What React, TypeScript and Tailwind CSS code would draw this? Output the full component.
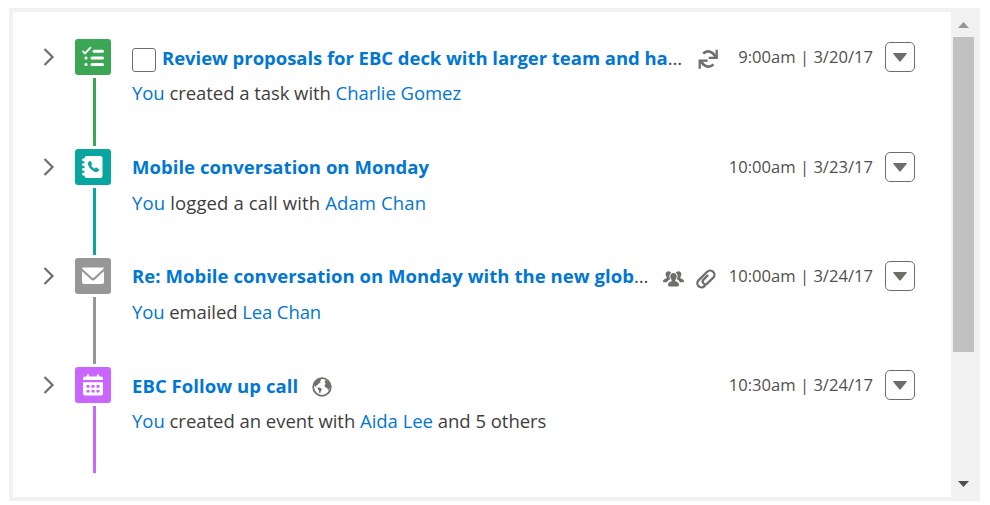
import type { ReactNode } from 'react';

interface Activity {
  id: string;
  title: string;
  action: string;
  who: string;
  rest?: string;
  time: string;
  color: string;
  height: string;
  titleClass: string;
  detailClass: string;
  trailingClass?: string;
  icon: ReactNode;
  hasCheckbox?: boolean;
  inline?: ReactNode;
  trailing?: ReactNode;
}

function TaskIcon() {
  return (
    <svg className="w-9 h-9" viewBox="0 0 36 36" fill="none" stroke="#fff">
      <path d="M7.5 11.8l2.5 2.6L16 8.2" strokeWidth="1.9" />
      <path d="M19 12.2h8.5M17 18.9h10.5M17 25.4h10.5" strokeWidth="3" strokeLinecap="round" />
      <path d="M10.9 18.9h.2M10.9 25.4h.2" strokeWidth="3" strokeLinecap="round" />
    </svg>
  );
}

function CallIcon() {
  return (
    <svg className="w-9 h-9" viewBox="0 0 36 36">
      <rect x="9.5" y="7" width="18" height="22" rx="2.2" fill="#fff" />
      <path d="M8.4 10.8h3M8.4 15.6h3M8.4 20.4h3M8.4 25.2h3" stroke="#fff" strokeWidth="2.8" strokeLinecap="round" />
      <path
        d="M13.4 13.2c.5-.9 1.4-1.5 2.1-.9l1.4 1.7c.4.6.2 1.2-.2 1.6-.6.6-.5 1 0 1.7.7 1 1.6 1.8 2.4 2.1.6.3.9 0 1.3-.5.4-.4.9-.4 1.4-.1l1.9 1.3c.7.6.4 1.2-.2 1.9-1.1 1.2-2.6 1.2-4.4.4-2.4-1.1-4.6-3.3-5.6-5.6-.6-1.4-.7-2.6-.1-3.6z"
        fill="#08a69e"
      />
    </svg>
  );
}

function EmailIcon() {
  return (
    <svg className="w-9 h-9" viewBox="0 0 36 36">
      <path d="M8 9.5h20c.7 0 1 .7.6 1.2L19 19.5c-.6.6-1.5.6-2.1 0L7.3 10.7C6.9 10.2 7.3 9.5 8 9.5z" fill="#fff" />
      <path d="M7 13.3l9.3 8.4c1 .9 2.5.9 3.4 0l9.3-8.4V24a2 2 0 0 1-2 2H9a2 2 0 0 1-2-2z" fill="#fff" />
    </svg>
  );
}

function EventIcon() {
  return (
    <svg className="w-9 h-9" viewBox="0 0 36 36">
      <path d="M13 8.3v3M23 8.3v3" stroke="#fff" strokeWidth="2.2" strokeLinecap="round" />
      <path d="M10 9.5h16a2 2 0 0 1 2 2V13H8v-1.5a2 2 0 0 1 2-2zM8 15.2h20v11.3a2 2 0 0 1-2 2H10a2 2 0 0 1-2-2z" fill="#fff" />
      <path d="M11.5 19.4h3M16.5 19.4h3M21.5 19.4h3M11.5 24.2h3M16.5 24.2h3M21.5 24.2h3" stroke="#c965ff" strokeWidth="2.6" />
    </svg>
  );
}

function RecurrenceIcon() {
  return (
    <svg className="w-5 h-5" viewBox="0 0 20 20" fill="none" stroke="#706e6b" strokeWidth="2.6">
      <path d="M5.2 4.7C8.8.8 14 2 17.500 7.600" />
      <path d="M18.700.8v8h-8" strokeWidth="2.3" />
      <path d="M15.400 15.300C11.800 19.200 6.500 18 3 12.500" />
      <path d="M1.700 19.700v-8h8" strokeWidth="2.3" />
    </svg>
  );
}

function GroupsIcon() {
  return (
    <svg className="w-[21px] h-4" viewBox="0 0 21 16" fill="#706e6b">
      <path d="M5.5.2c1.300 0 2.300.7 2.600 1.800C6.700 3 6.200 4.500 6.500 6.300c.1.8.3 1.300.7 1.900-1.600.7-2.600 1.600-3.100 3.100H1C.4 11.300 0 10.900 0 10.300 0 8.700 1.500 8.200 3 7.600c.8-.3.9-1.300.4-1.900C2.900 5.100 2.600 4.300 2.600 3.300 2.600 1.500 3.700.2 5.500.2z" />
      <path d="M15.500.2c-1.300 0-2.300.7-2.600 1.800 1.400 1 1.900 2.500 1.600 4.300-.1.800-.3 1.300-.7 1.900 1.600.7 2.600 1.600 3.100 3.100H20c.6 0 1-.4 1-1 0-1.600-1.500-2.100-3-2.700-.8-.3-.9-1.300-.4-1.900.5-.6.8-1.400.8-2.400 0-1.800-1.100-3.100-2.900-3.100z" />
      <path d="M10.500 2.100c2 0 3.200 1.400 3.200 3.400 0 1.200-.4 2.200-1.100 2.900-.6.7-.5 1.700.4 2.100 1.800.8 3 1.300 3 3.300 0 .9-.6 1.600-1.500 1.600h-8c-.9 0-1.500-.7-1.500-1.600 0-2 1.200-2.500 3-3.300.9-.4 1-1.400.4-2.100-.7-.7-1.100-1.700-1.100-2.900 0-2 1.200-3.400 3.200-3.400z" />
    </svg>
  );
}

function AttachIcon() {
  return (
    <svg className="w-5 h-5" viewBox="0 0 20 20" fill="none" stroke="#706e6b" strokeWidth="2.300" strokeLinecap="round">
      <path d="M9.300 16.200l-.9.900a4 4 0 0 1-5.900-5.700l8.700-8.600a4.200 4.200 0 0 1 6 5.900l-5.800 5.700a2.700 2.700 0 0 1-3.900-3.800l4-4" />
    </svg>
  );
}

function WorldIcon() {
  return (
    <svg className="w-5 h-5" viewBox="0 0 20 20">
      <circle cx="10" cy="10" r="8.8" fill="none" stroke="#706e6b" strokeWidth="1.8" />
      <path d="M2 6.500L5.500 3l2.800-1.300 1 1-1.500 1.600 1 1-2.300 1.500-.8 1.300-1.500.2.4 1.300-1.100.2-1.500-1.700z" fill="#706e6b" />
      <path d="M5.800 10.300l2.800.6 1.400 1.500-1.200 1.700-.5 2.400-1-.5-.6-2.900-1-1z" fill="#706e6b" />
      <path d="M12.600 4.800l1.100-1.800L16.500 5l1.800 3.800-.8 2.800-1.200 2.200-1.100-2.900-2.100-.6-.7-2 1.300-1.300z" fill="#706e6b" />
    </svg>
  );
}

const activities: Activity[] = [
  {
    id: 'task',
    title: 'Review proposals for EBC deck with larger team and have it ready',
    action: 'created a task with',
    who: 'Charlie Gomez',
    time: '9:00am | 3/20/17',
    color: 'bg-[#3ba755]',
    height: 'h-[110px]',
    titleClass: 'w-[524px] mt-[2px] tracking-[-0.04px]',
    detailClass: 'tracking-[-0.055px]',
    trailingClass: 'mr-5 mt-[3px]',
    icon: <TaskIcon />,
    hasCheckbox: true,
    trailing: <RecurrenceIcon />,
  },
  {
    id: 'call',
    title: 'Mobile conversation on Monday',
    action: 'logged a call with',
    who: 'Adam Chan',
    time: '10:00am | 3/23/17',
    color: 'bg-[#08a69e]',
    height: 'h-[109px]',
    titleClass: 'tracking-[0.04px]',
    detailClass: 'tracking-[0.13px]',
    icon: <CallIcon />,
  },
  {
    id: 'email',
    title: 'Re: Mobile conversation on Monday with the new global team',
    action: 'emailed',
    who: 'Lea Chan',
    time: '10:00am | 3/24/17',
    color: 'bg-[#979797]',
    height: 'h-[109px]',
    titleClass: 'w-[520px] tracking-[0.05px]',
    detailClass: 'tracking-[-0.1px]',
    trailingClass: 'mr-[13px] mt-[5px]',
    icon: <EmailIcon />,
    trailing: (
      <>
        <GroupsIcon />
        <AttachIcon />
      </>
    ),
  },
  {
    id: 'event',
    title: 'EBC Follow up call',
    action: 'created an event with',
    who: 'Aida Lee',
    rest: 'and 5 others',
    time: '10:30am | 3/24/17',
    color: 'bg-[#c965ff]',
    height: 'h-[109px]',
    titleClass: 'mt-[2px] tracking-[0.06px]',
    detailClass: 'tracking-[-0.03px]',
    icon: <EventIcon />,
    inline: <WorldIcon />,
  },
];

function ActivityRow({ item }: { item: Activity }) {
  return (
    <li className={`flex items-start ${item.height}`}>
      {/* Expand toggle */}
      <button className="w-[33px] h-9 pl-px shrink-0 flex items-center" aria-label="Toggle details">
        <svg className="w-3 h-[18px]" viewBox="0 0 12 18" fill="none" stroke="#706e6b" strokeWidth="2.2">
          <path d="M1.500 1L9.500 9l-8 8" />
        </svg>
      </button>

      {/* Icon and timeline */}
      <div className="w-9 h-full flex flex-col items-center shrink-0">
        <div className={`w-9 h-9 shrink-0 rounded-[3px] ${item.color}`}>{item.icon}</div>
        <div className={`w-[3px] ml-[3px] my-[3px] flex-1 ${item.color}`} />
      </div>

      <div className="flex-1 min-w-0 pl-[21px]">
        <div className="flex items-center h-9">
          {item.hasCheckbox && (
            <span className="w-6 h-6 mt-[6px] mr-[6px] shrink-0 rounded-[3px] border border-[#706e6b] bg-white" />
          )}
          <h3 className={`truncate shrink-0 text-[#3e3e3c] leading-[30px] text-[18.5px] ${item.titleClass}`}>
            <a className="font-bold text-[#0176d3]">{item.title}</a>
          </h3>
          {item.inline && <span className="ml-[14px] mt-[4px]">{item.inline}</span>}
          <div className="ml-auto flex items-center shrink-0">
            {item.trailing && <span className={`flex items-center gap-3 ${item.trailingClass}`}>{item.trailing}</span>}
            <span className="text-[16.6px] text-[#514f4d] whitespace-nowrap">{item.time}</span>
            <button
              className="w-[30px] h-[30px] ml-3 flex items-center justify-center rounded-[5px] border border-[#706e6b] bg-white"
              aria-label="More actions"
            >
              <svg className="w-[14px] h-[9px]" viewBox="0 0 14 9" fill="#706e6b">
                <path d="M1 0h12c.7 0 1 .6.6 1.1L7.7 8.3c-.4.4-1 .4-1.4 0L.4 1.1C0 .6.3 0 1 0z" />
              </svg>
            </button>
          </div>
        </div>
        <p className={`leading-[28px] mt-[4px] text-[18.5px] text-[#3e3e3c] whitespace-nowrap ${item.detailClass}`}>
          <a className="text-[#0176d3]">You</a> {item.action} <a className="text-[#0176d3]">{item.who}</a>
          {item.rest && ` ${item.rest}`}
        </p>
      </div>
    </li>
  );
}

export default function App() {
  return (
    <div className="w-[990px] h-[505px] bg-white pt-2 pl-[9px] font-['Open_Sans',sans-serif]">
      <div className="w-[971px] h-[493px] flex border-4 border-r-0 border-[#f1f1f1]">
        <ul className="flex-1 min-w-0 pt-[27px] pl-[29px] pr-9">
          {activities.map((item) => (
            <ActivityRow key={item.id} item={item} />
          ))}
        </ul>

        {/* Scrollbar */}
        <div className="w-[29px] bg-[#f1f1f1] flex flex-col pl-[2px]">
          <div className="w-[21px] h-[25px] flex justify-center pt-[10px]">
            <svg className="w-[11px] h-[6px]" viewBox="0 0 11 6" fill="#979797">
              <path d="M5.5 0L11 6H0z" />
            </svg>
          </div>
          <div className="w-[21px] h-[315px] bg-[#c1c1c1]" />
          <div className="w-[21px] mt-auto pb-[10px] flex justify-center">
            <svg className="w-[11px] h-[6px]" viewBox="0 0 11 6" fill="#505050">
              <path d="M0 0h11L5.5 6z" />
            </svg>
          </div>
        </div>
      </div>
    </div>
  );
}
